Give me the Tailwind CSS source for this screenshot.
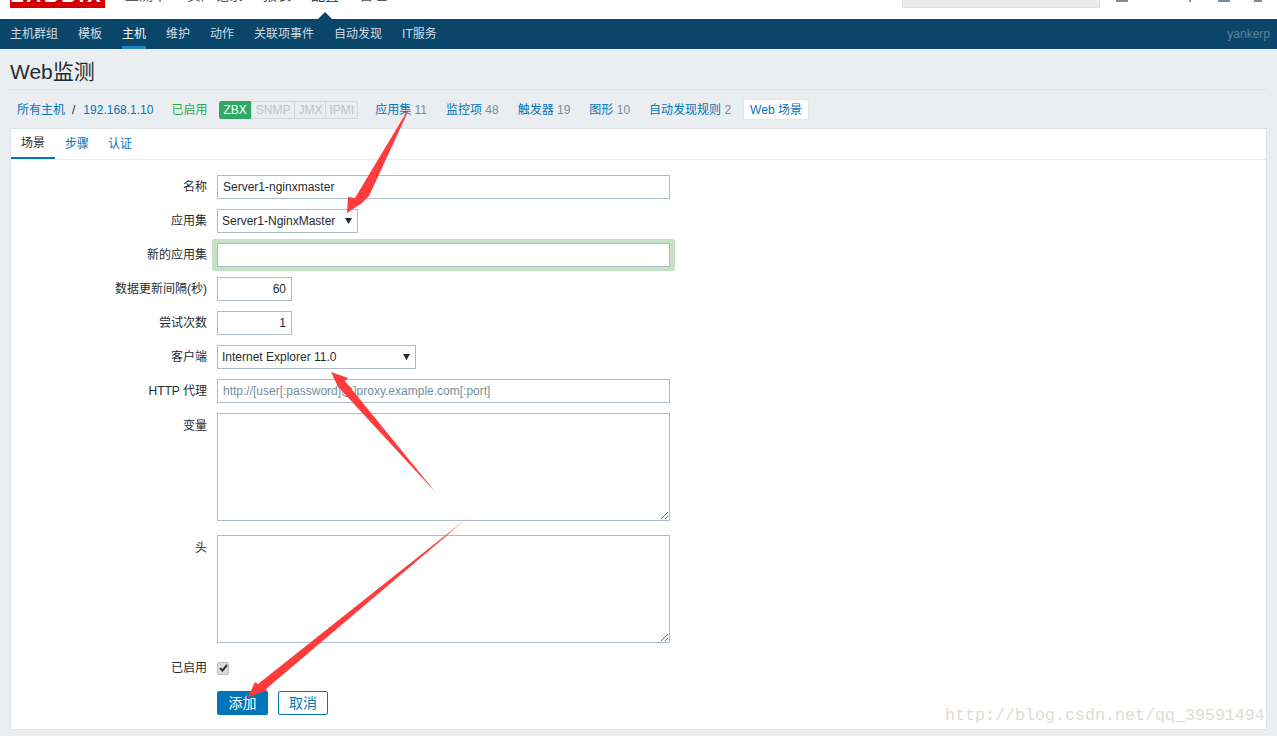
<!DOCTYPE html>
<html lang="en">
<head>
  <meta charset="UTF-8" />
  <title>Web监测</title>
  <script src="https://cdn.jsdelivr.net/npm/@tailwindcss/browser@4"></script>
</head>
<body class="relative h-[736px] overflow-hidden bg-[#ebeef1] text-[12px] text-[#1f2c33] font-['Liberation_Sans','Noto_Sans_CJK_SC',sans-serif]">
  <!-- top menu, cut off by the screenshot -->
  <header class="relative h-[19px] overflow-hidden bg-white">
    <div class="absolute left-[10px] top-[-14px] flex h-[22px] w-[95px] items-center justify-center bg-[#d40000] pb-[5px] text-[20px] font-bold tracking-[3px] text-white">ZABBIX</div>
    <nav class="absolute left-[125px] top-[-14px] flex gap-[20px] text-[14px] leading-[18px] text-[#555]">
      <span>监测中</span><span>资产记录</span><span>报表</span><span class="text-[#1f2c33]">配置</span><span>管理</span>
    </nav>
    <div class="absolute left-[318px] top-[12px] h-0 w-0 border-x-[7px] border-b-[7px] border-x-transparent border-b-[#0a466a]"></div>
    <div class="absolute left-[902px] top-[-16px] h-[24px] w-[198px] border border-[#dfe0e0] bg-[#ebebeb]"></div>
    <div class="absolute left-[1116px] top-0 h-[2px] w-[12px] bg-[#768d99]"></div>
    <div class="absolute left-[1189px] top-0 h-[2px] w-[2px] bg-[#768d99]"></div>
    <div class="absolute left-[1218px] top-0 h-[2px] w-[12px] bg-[#768d99]"></div>
    <div class="absolute left-[1254px] top-0 h-[2px] w-[8px] bg-[#768d99]"></div>
  </header>

  <nav class="flex h-[30px] items-center justify-between bg-[#0a466a] pl-[10px] pr-[7px] text-[12px] text-[#d3dee5]">
    <ul class="flex h-full gap-[20px]">
      <li class="flex items-center">主机群组</li>
      <li class="flex items-center">模板</li>
      <li class="flex items-center border-b-[3px] border-[#1e87c3] pt-[3px] text-white">主机</li>
      <li class="flex items-center">维护</li>
      <li class="flex items-center">动作</li>
      <li class="flex items-center">关联项事件</li>
      <li class="flex items-center">自动发现</li>
      <li class="flex items-center">IT服务</li>
    </ul>
    <span class="text-[#5f8298]">yankerp</span>
  </nav>

  <main class="px-[10px]">
    <h1 class="flex h-[41px] items-center border-b border-[#dfe4e7] pt-[5px] text-[21px] font-normal leading-none">Web监测</h1>

    <div class="flex h-[38px] items-center pl-[7px] pt-[1px] text-[#0275b8]">
      <span>所有主机</span>
      <span class="ml-[7px] mr-[8px] text-[#1f2c33]">/</span>
      <span>192.168.1.10</span>
      <span class="ml-[18px] text-[#2da84f]">已启用</span>
      <div class="ml-[12px] flex h-[18px] text-[12px] leading-[16px]">
        <span class="rounded-l-[2px] border border-[#2fa866] bg-[#2fa866] px-[3px] text-white">ZBX</span>
        <span class="border border-[#d5d8da] bg-[#ebeef1] px-[4px] text-[#bcc4ca]">SNMP</span>
        <span class="border-y border-r border-[#d5d8da] bg-[#ebeef1] px-[3px] text-[#bcc4ca]">JMX</span>
        <span class="rounded-r-[2px] border-y border-r border-[#d5d8da] bg-[#ebeef1] px-[3px] text-[#bcc4ca]">IPMI</span>
      </div>
      <span class="ml-[17px]">应用集 <span class="text-[#768d99]">11</span></span>
      <span class="ml-[19px]">监控项 <span class="text-[#768d99]">48</span></span>
      <span class="ml-[19px]">触发器 <span class="text-[#768d99]">19</span></span>
      <span class="ml-[19px]">图形 <span class="text-[#768d99]">10</span></span>
      <span class="ml-[19px]">自动发现规则 <span class="text-[#768d99]">2</span></span>
      <span class="ml-[12px] flex h-[21px] items-center rounded-[2px] border border-[#e4e8eb] bg-white px-[6px]">Web 场景</span>
    </div>

    <section class="h-[602px] border border-[#dfe4e7] bg-white">
      <div class="flex h-[31px] border-b border-[#ebeef1] text-[#0275b8]">
        <span class="flex w-[44px] items-center justify-center border-b-2 border-[#0275b8] text-[#1f2c33]">场景</span>
        <span class="ml-[10px] flex items-center">步骤</span>
        <span class="ml-[19px] flex items-center">认证</span>
      </div>

      <form class="pt-[15px]">
        <div class="flex h-[24px] items-center">
          <label class="w-[206px] pr-[10px] text-right">名称</label>
          <input class="h-[24px] w-[453px] border border-[#acbbc7] px-[5px] text-[12px]" value="Server1-nginxmaster" />
        </div>
        <div class="mt-[10px] flex h-[24px] items-center">
          <label class="w-[206px] pr-[10px] text-right">应用集</label>
          <div class="relative">
            <select class="h-[24px] w-[141px] appearance-none rounded-none border border-[#acbbc7] bg-white px-[4px] text-[12px]"><option>Server1-NginxMaster</option></select>
            <svg class="absolute right-[6px] top-[9px]" width="7" height="6" viewBox="0 0 7 6"><path d="M0 0h7L3.5 6z" fill="#1f2c33"/></svg>
          </div>
        </div>
        <div class="mt-[6px] flex h-[32px] items-center">
          <label class="w-[206px] pr-[10px] text-right">新的应用集</label>
          <div class="-ml-[5px] rounded-[2px] bg-[#c5e1c8] px-[5px] py-[4px]">
            <input class="block h-[24px] w-[453px] border border-[#acbbc7] bg-white px-[5px]" />
          </div>
        </div>
        <div class="mt-[6px] flex h-[24px] items-center">
          <label class="w-[206px] pr-[10px] text-right">数据更新间隔(秒)</label>
          <input class="h-[24px] w-[75px] border border-[#acbbc7] px-[5px] text-right text-[12px]" value="60" />
        </div>
        <div class="mt-[10px] flex h-[24px] items-center">
          <label class="w-[206px] pr-[10px] text-right">尝试次数</label>
          <input class="h-[24px] w-[75px] border border-[#acbbc7] px-[5px] text-right text-[12px]" value="1" />
        </div>
        <div class="mt-[10px] flex h-[24px] items-center">
          <label class="w-[206px] pr-[10px] text-right">客户端</label>
          <div class="relative">
            <select class="h-[24px] w-[199px] appearance-none rounded-none border border-[#acbbc7] bg-white px-[4px] text-[12px]"><option>Internet Explorer 11.0</option></select>
            <svg class="absolute right-[6px] top-[9px]" width="7" height="6" viewBox="0 0 7 6"><path d="M0 0h7L3.5 6z" fill="#1f2c33"/></svg>
          </div>
        </div>
        <div class="mt-[10px] flex h-[24px] items-center">
          <label class="w-[206px] pr-[10px] text-right">HTTP 代理</label>
          <input class="h-[24px] w-[453px] border border-[#acbbc7] px-[5px] text-[12px] placeholder:text-[#768d99]" placeholder="http://[user[:password]@]proxy.example.com[:port]" />
        </div>
        <div class="mt-[10px] flex">
          <label class="w-[206px] pr-[10px] pt-[4px] text-right">变量</label>
          <textarea class="block h-[108px] w-[453px] border border-[#acbbc7]"></textarea>
        </div>
        <div class="mt-[14px] flex">
          <label class="w-[206px] pr-[10px] pt-[4px] text-right">头</label>
          <textarea class="block h-[108px] w-[453px] border border-[#acbbc7]"></textarea>
        </div>
        <div class="mt-[18px] flex h-[14px] items-center">
          <label class="w-[206px] pr-[10px] text-right">已启用</label>
          <span class="flex h-[13px] w-[12px] items-center justify-center rounded-[2px] border border-[#bcbcbc] bg-[#dcdcdc]">
            <svg width="9" height="8" viewBox="0 0 9 8"><path d="M1 4l2.4 2.6L8 1" fill="none" stroke="#333" stroke-width="2"/></svg>
          </span>
        </div>
        <div class="mt-[16px] flex pl-[206px]">
          <button type="button" class="h-[24px] w-[51px] rounded-[2px] bg-[#0275b8] text-[14px] text-white">添加</button>
          <button type="button" class="ml-[10px] h-[24px] w-[50px] rounded-[2px] border border-[#0275b8] bg-white text-[14px] text-[#0275b8]">取消</button>
        </div>
      </form>
    </section>
  </main>

  <!-- watermark and annotation arrows drawn over the screenshot -->
  <div class="absolute left-[945px] top-[706px] font-['Liberation_Mono',monospace] text-[16.67px] leading-[20px] text-[#dddcd6]">http://blog.csdn.net/qq_39591494</div>
  <svg class="pointer-events-none absolute left-0 top-0" width="1277" height="736" viewBox="0 0 1277 736">
    <defs>
      <linearGradient id="a1" gradientUnits="userSpaceOnUse" x1="412" y1="103" x2="347" y2="213"><stop offset="0" stop-color="#ff3b3b" stop-opacity=".3"/><stop offset=".12" stop-color="#ff3b3b"/></linearGradient>
      <linearGradient id="a2" gradientUnits="userSpaceOnUse" x1="437" y1="494" x2="331" y2="372"><stop offset="0" stop-color="#ff3b3b" stop-opacity=".5"/><stop offset=".1" stop-color="#ff3b3b"/></linearGradient>
      <linearGradient id="a3" gradientUnits="userSpaceOnUse" x1="471" y1="515" x2="248" y2="697"><stop offset="0" stop-color="#ff3b3b" stop-opacity=".2"/><stop offset=".12" stop-color="#ff3b3b"/></linearGradient>
    </defs>
    <path d="M412 103 L369 196 L362 203 L347 213 L348 197 L355 198 Z" fill="url(#a1)"/>
    <path d="M437 494 L345 381 L348 378 L331 372 L338 387 L342 391 Z" fill="url(#a2)"/>
    <path d="M471 515 L258 684 L255 682 L248 697 L268 690 L266 689 Z" fill="url(#a3)"/>
  </svg>
</body>
</html>
